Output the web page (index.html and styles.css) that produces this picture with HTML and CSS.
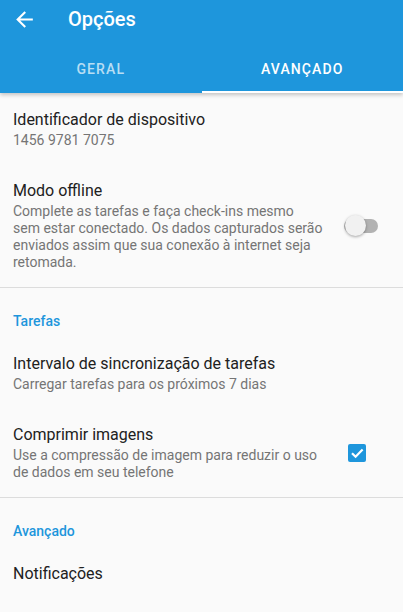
FILE: index.html
```html
<!DOCTYPE html>
<html lang="pt">
<head>
	<meta charset="UTF-8">
	<title>Opções</title>
	<link rel="stylesheet" href="styles.css">
</head>
<body>
	<div class="appbar">
		<div class="toolbar">
			<svg class="back" width="24" height="24" viewBox="0 0 24 24"><path d="M20 11H7.83l5.59-5.59L12 4l-8 8 8 8 1.41-1.41L7.83 13H20v-2z" fill="#fff"/></svg>
			<h1 class="title">Opções</h1>
		</div>
		<div class="tabs">
			<span class="tab">GERAL</span>
			<span class="tab active">AVANÇADO</span>
		</div>
	</div>
	<div class="prefs">
		<div class="pref first">
			<div class="pref-text">
				<div class="pref-title">Identificador de dispositivo</div>
				<div class="pref-sub">1456 9781 7075</div>
			</div>
		</div>
		<div class="pref">
			<div class="pref-text">
				<div class="pref-title">Modo offline</div>
				<div class="pref-sub">Complete as tarefas e faça check-ins mesmo sem&nbsp;estar conectado. Os dados capturados serão enviados assim que sua conexão à internet seja retomada.</div>
			</div>
			<div class="switch"><span class="thumb"></span></div>
		</div>
		<div class="divider"></div>
		<div class="category">Tarefas</div>
		<div class="pref">
			<div class="pref-text">
				<div class="pref-title">Intervalo de sincronização de tarefas</div>
				<div class="pref-sub">Carregar tarefas para os próximos 7 dias</div>
			</div>
		</div>
		<div class="pref">
			<div class="pref-text">
				<div class="pref-title">Comprimir imagens</div>
				<div class="pref-sub">Use a compressão de imagem para reduzir o uso de dados em seu telefone</div>
			</div>
			<svg class="check" width="18" height="18" viewBox="0 0 18 18"><rect width="18" height="18" rx="2" fill="#1e96dc"/><path d="M4 9.2l3.6 3.6L14.6 5.6" fill="none" stroke="#fff" stroke-width="2.2"/></svg>
		</div>
		<div class="divider"></div>
		<div class="category">Avançado</div>
		<div class="pref">
			<div class="pref-text">
				<div class="pref-title">Notificações</div>
			</div>
		</div>
	</div>
</body>
</html>
```

FILE: styles.css
```css
* {margin: 0;padding: 0;box-sizing: border-box;}
body {font-family: Roboto, "Noto Sans", sans-serif;background: #fafafa;color: #212121;overflow: hidden;}
.appbar {position: relative;z-index: 2;background: #1e96dc;color: #fff;box-shadow: 0 2px 4px rgba(0,0,0,.22);}
.toolbar {display: flex;align-items: center;height: 38px;}
.back {margin-left: 12px;width: 25px;height: 25px;}
.title {margin-left: 31px;font-size: 20px;font-weight: 500;}
.tabs {display: flex;height: 55px;}
.tab {flex: 1;display: flex;align-items: center;justify-content: center;padding-top: 9px;font-size: 14px;font-weight: 500;letter-spacing: 1.1px;color: rgba(255,255,255,.7);border-bottom: 2px solid transparent;}
.tab.active {color: #fff;border-bottom-color: #fff;}
.prefs {padding-top: 1px;}
.pref {display: flex;align-items: center;padding: 16px 0 16px 13px;}
.pref-text {flex: 1;}
.pref-title {font-size: 16px;line-height: 20px;margin-bottom: 2px;}
.pref-sub {font-size: 14px;line-height: 17px;color: #757575;}
.divider {height: 1px;background: #dcdcdc;}
.category {padding: 23px 13px 7px;font-size: 14px;line-height: 20px;font-weight: 500;color: #1e96dc;}
.switch {position: relative;flex: none;width: 34px;height: 14px;margin: 0 25px 0 17px;border-radius: 7px;background: #b2b2b2;}
.thumb {position: absolute;left: 1px;top: -4px;width: 21px;height: 21px;border-radius: 50%;background: #f1f1f1;box-shadow: 0 1px 3px rgba(0,0,0,.35);}
.check {flex: none;margin: 0 37px 0 27px;}
```
